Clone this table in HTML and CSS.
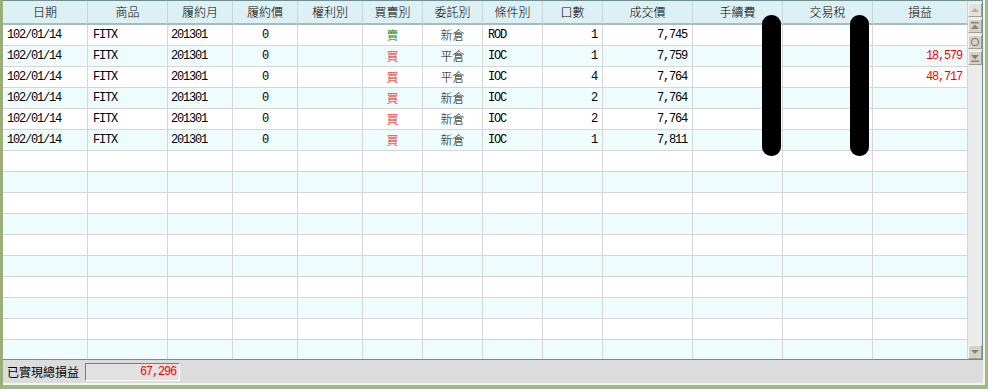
FILE: index.html
```html
<!DOCTYPE html>
<html lang="zh-Hant">
<head>
<meta charset="utf-8">
<title>已實現損益</title>
<link rel="stylesheet" href="styles.css">
</head>
<body>
<div class="window">
  <div class="main">
    <div class="grid">
      <div class="table">
        <div class="row head">
          <div>日期</div><div>商品</div><div>履約月</div><div>履約價</div><div>權利別</div><div>買賣別</div><div>委託別</div><div>條件別</div><div>口數</div><div>成交價</div><div>手續費</div><div>交易稅</div><div>損益</div>
        </div>
        <div class="body">
          <div class="row">
            <div class="m l1">102/01/14</div><div class="m l">FITX</div><div class="m l2">201301</div><div class="m c">0</div><div></div><div class="c sell">賣</div><div class="c">新倉</div><div class="m l">ROD</div><div class="m r">1</div><div class="m r">7,745</div><div></div><div></div><div class="m r"></div>
          </div>
          <div class="row">
            <div class="m l1">102/01/14</div><div class="m l">FITX</div><div class="m l2">201301</div><div class="m c">0</div><div></div><div class="c buy">買</div><div class="c">平倉</div><div class="m l">IOC</div><div class="m r">1</div><div class="m r">7,759</div><div></div><div></div><div class="m r red">18,579</div>
          </div>
          <div class="row">
            <div class="m l1">102/01/14</div><div class="m l">FITX</div><div class="m l2">201301</div><div class="m c">0</div><div></div><div class="c buy">買</div><div class="c">平倉</div><div class="m l">IOC</div><div class="m r">4</div><div class="m r">7,764</div><div></div><div></div><div class="m r red">48,717</div>
          </div>
          <div class="row">
            <div class="m l1">102/01/14</div><div class="m l">FITX</div><div class="m l2">201301</div><div class="m c">0</div><div></div><div class="c buy">買</div><div class="c">新倉</div><div class="m l">IOC</div><div class="m r">2</div><div class="m r">7,764</div><div></div><div></div><div class="m r"></div>
          </div>
          <div class="row">
            <div class="m l1">102/01/14</div><div class="m l">FITX</div><div class="m l2">201301</div><div class="m c">0</div><div></div><div class="c buy">買</div><div class="c">新倉</div><div class="m l">IOC</div><div class="m r">2</div><div class="m r">7,764</div><div></div><div></div><div class="m r"></div>
          </div>
          <div class="row">
            <div class="m l1">102/01/14</div><div class="m l">FITX</div><div class="m l2">201301</div><div class="m c">0</div><div></div><div class="c buy">買</div><div class="c">新倉</div><div class="m l">IOC</div><div class="m r">1</div><div class="m r">7,811</div><div></div><div></div><div class="m r"></div>
          </div>
          <div class="row"><div></div><div></div><div></div><div></div><div></div><div></div><div></div><div></div><div></div><div></div><div></div><div></div><div></div></div>
          <div class="row"><div></div><div></div><div></div><div></div><div></div><div></div><div></div><div></div><div></div><div></div><div></div><div></div><div></div></div>
          <div class="row"><div></div><div></div><div></div><div></div><div></div><div></div><div></div><div></div><div></div><div></div><div></div><div></div><div></div></div>
          <div class="row"><div></div><div></div><div></div><div></div><div></div><div></div><div></div><div></div><div></div><div></div><div></div><div></div><div></div></div>
          <div class="row"><div></div><div></div><div></div><div></div><div></div><div></div><div></div><div></div><div></div><div></div><div></div><div></div><div></div></div>
          <div class="row"><div></div><div></div><div></div><div></div><div></div><div></div><div></div><div></div><div></div><div></div><div></div><div></div><div></div></div>
          <div class="row"><div></div><div></div><div></div><div></div><div></div><div></div><div></div><div></div><div></div><div></div><div></div><div></div><div></div></div>
          <div class="row"><div></div><div></div><div></div><div></div><div></div><div></div><div></div><div></div><div></div><div></div><div></div><div></div><div></div></div>
          <div class="row"><div></div><div></div><div></div><div></div><div></div><div></div><div></div><div></div><div></div><div></div><div></div><div></div><div></div></div>
          <div class="row"><div></div><div></div><div></div><div></div><div></div><div></div><div></div><div></div><div></div><div></div><div></div><div></div><div></div></div>
        </div>
      </div>
      <div class="scrollbar">
        <div class="sbtn disabled">
          <svg width="12" height="12" viewBox="0 0 12 12"><polygon points="2,8 6,4 10,8" /></svg>
        </div>
        <div class="sbtn">
          <svg width="12" height="12" viewBox="0 0 12 12"><rect x="2" y="2" width="8" height="1.5"/><polygon points="2,9 6,4.5 10,9" /></svg>
        </div>
        <div class="sbtn">
          <svg width="12" height="12" viewBox="0 0 12 12"><circle cx="6" cy="6" r="3.6" fill="none" stroke-width="1.2"/></svg>
        </div>
        <div class="sbtn">
          <svg width="12" height="12" viewBox="0 0 12 12"><polygon points="2,3 6,7.5 10,3" /><rect x="2" y="8.5" width="8" height="1.5"/></svg>
        </div>
        <div class="sbtn bottom">
          <svg width="12" height="12" viewBox="0 0 12 12"><polygon points="2,4 6,8 10,4" /></svg>
        </div>
      </div>
    </div>
    <div class="status">
      <span class="label">已實現總損益</span>
      <span class="total m">67,296</span>
    </div>
  </div>
  <div class="redact r1"></div>
  <div class="redact r2"></div>
</div>
</body>
</html>
```
FILE: styles.css
```css
html, body {
  margin: 0;
  padding: 0;
  background: #a3b985;
}

.window {
  position: relative;
  width: 988px;
  height: 389px;
  box-sizing: border-box;
  border-left: 3px solid #9aae7a;
  border-right: 3px solid #a3b985;
  border-bottom: 4px solid #a3b985;
  padding: 0 2px 2px 0;
  background: #f3f5ea;
  overflow: hidden;
  font-family: "Noto Sans CJK TC", "Noto Sans", sans-serif;
  font-weight: 300;
  font-size: 12px;
  color: #000;
}

.main {
  display: flex;
  flex-direction: column;
  height: 383px;
}

.grid {
  display: flex;
  height: 360px;
  box-sizing: border-box;
  border-top: 1px solid #6f8e91;
  border-bottom: 1px solid #6f8e91;
  border-right: 1px solid #6f8e91;
  background: #ffffff;
}

.table {
  width: 965px;
  display: flex;
  flex-direction: column;
}

.row {
  display: grid;
  grid-template-columns: 85px 80px 65px 65px 65px 60px 60px 60px 60px 90px 90px 90px 95px;
  height: 21px;
  background: #ffffff;
}

.body .row:nth-child(even) {
  background: #effcfe;
}

.row > div {
  box-sizing: border-box;
  border-right: 1px solid #d6d6d6;
  border-bottom: 1px solid #d6d6d6;
  line-height: 20px;
  white-space: nowrap;
  overflow: hidden;
}

.row.head {
  height: 24px;
  background: #ddf0f3;
}

.row.head > div {
  border-right: 1px solid #c6d7da;
  border-bottom: 2px solid #a6bcc0;
  line-height: 22px;
  text-align: center;
}

.body {
  height: 334px;
  overflow: hidden;
}

.m {
  font-family: "Liberation Mono", monospace;
  font-weight: 400;
  font-size: 12px;
  letter-spacing: -1.2px;
}

.l1 { padding-left: 4px; }
.l { padding-left: 5px; }
.l2 { padding-left: 3px; }
.c { text-align: center; }
.r { text-align: right; padding-right: 5px; }

.sell { color: #008000; }
.buy { color: #ff0000; }
.red { color: #ff0000; }

.scrollbar {
  width: 14px;
  background: #ebebeb;
  display: flex;
  flex-direction: column;
  gap: 2px;
  padding-top: 2px;
}

.sbtn {
  height: 14px;
  box-sizing: border-box;
  border-top: 1px solid #f5f3ec;
  border-left: 1px solid #f5f3ec;
  border-right: 1px solid #a19d90;
  border-bottom: 1px solid #a19d90;
  background: #d6d2c4;
  display: flex;
  align-items: center;
  justify-content: center;
}

.sbtn svg {
  fill: #85847a;
  stroke: #85847a;
  stroke-width: 0;
}

.sbtn svg circle {
  stroke-width: 1.2;
}

.sbtn.disabled {
  background: #e4e1d6;
}

.sbtn.disabled svg {
  fill: #b0afa6;
}

.sbtn.bottom {
  margin-top: auto;
}

.status {
  height: 23px;
  background: #dcdcdc;
  display: flex;
  align-items: center;
  gap: 6px;
  padding-left: 4px;
}

.label {
  font-size: 12px;
  font-weight: 400;
}

.total {
  width: 95px;
  height: 18px;
  box-sizing: border-box;
  border-top: 1px solid #7c7c7c;
  border-left: 1px solid #7c7c7c;
  border-right: 1px solid #ffffff;
  border-bottom: 1px solid #ffffff;
  background: #e2e2e2;
  color: #ff0000;
  text-align: right;
  padding-right: 3px;
  line-height: 16px;
}

.redact {
  position: absolute;
  top: 15px;
  width: 19px;
  height: 141px;
  background: #000;
  border-radius: 9px;
}

.r1 { left: 759px; }
.r2 { left: 847px; }
```
